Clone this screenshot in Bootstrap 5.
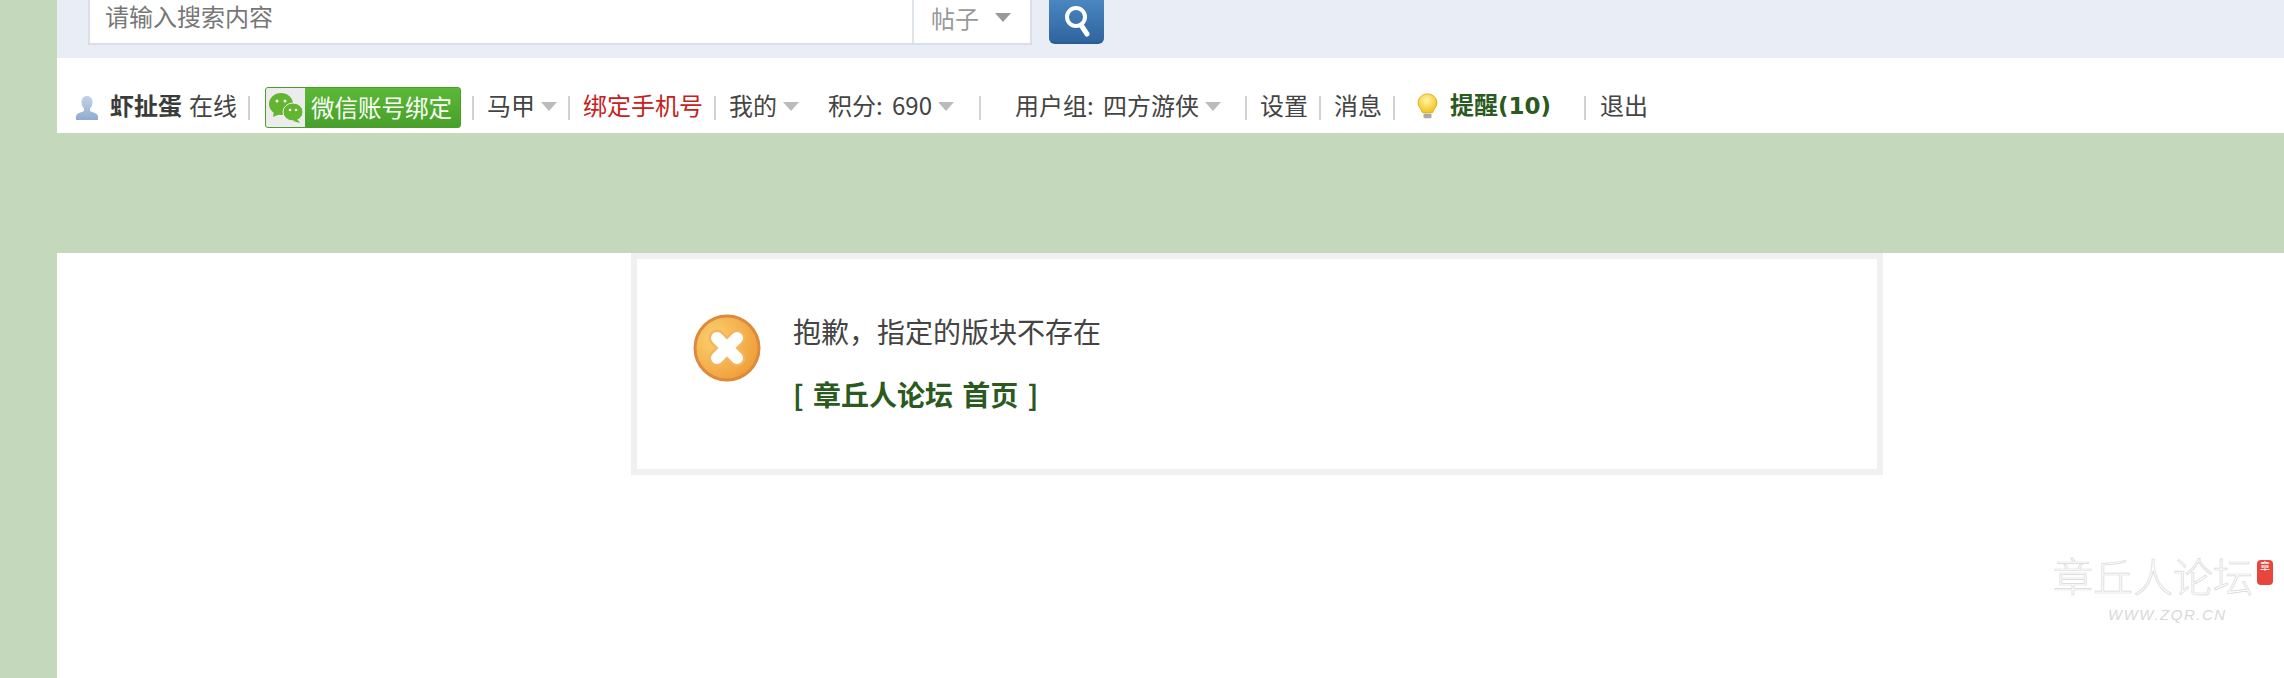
<!DOCTYPE html>
<html lang="zh-CN">
<head>
    <meta charset="UTF-8">
    <meta name="viewport" content="width=device-width, initial-scale=1.0">
    <title>章丘人论坛</title>
    <link href="https://cdn.jsdelivr.net/npm/bootstrap@5.3.2/dist/css/bootstrap.min.css" rel="stylesheet">
    <style>
        html, body { height: 100%; }
        body {
            font-family: "Noto Sans CJK SC", "Liberation Sans", sans-serif;
            font-size: 24px;
            color: #444;
            overflow: hidden;
            position: relative;
        }
        a { color: inherit; text-decoration: none; }
        .side-strip { width: 57px; flex: none; background: #c4d9bc; }
        .main-col { min-width: 0; }

        /* search header */
        .search-bar { height: 58px; background: #e8edf6; padding-left: 31px; }
        .search-box { width: 944px; height: 45px; background: #fff; border-right: 2px solid #d9dfe8; border-bottom: 2px solid #d9dfe8; border-left: 2px solid #d9dfe8; }
        .search-input.form-control { flex: 1; height: 43px; border: 0; border-radius: 0; background: transparent; font-size: 24px; line-height: 1; padding: 0 0 12px 15px; color: #777; box-shadow: none; }
        .search-input::placeholder { color: #777; opacity: 1; }
        .search-type { width: 118px; height: 43px; border-left: 2px solid #dfe3ea; padding: 0 0 8px 17px; color: #999; }
        .search-btn { width: 55px; height: 44px; margin-left: 17px; background: linear-gradient(#4a86c0, #2f659f); border-radius: 0 0 6px 6px; border-bottom: 2px solid #2a5a90; }

        /* user toolbar */
        .tool-bar { height: 75px; padding: 26px 0 8px 19px; white-space: nowrap; line-height: 41px; }
        .caret-down { width: 0; height: 0; border-left: 8px solid transparent; border-right: 8px solid transparent; border-top: 9px solid #bbb; margin-left: 6px; margin-top: 4px; }
        .search-type .caret-down { border-top-color: #999; margin-left: 16px; margin-top: 0; }
        .tool-sep { width: 2px; height: 24px; background: #d2d2d2; margin: 6px 13px 0 11px; }
        .user-icon { margin-right: 12px; margin-top: 6px; }
        .user-name { font-weight: 700; color: #3b3b3b; margin-right: 7px; }
        .wx-bind { width: 196px; height: 41px; flex: none; border-radius: 3px; overflow: hidden; background: linear-gradient(#5cb838, #47a02a); border: 1px solid #4a9c2b; margin: 6px 0 0 2px; }
        .wx-logo { width: 39px; height: 100%; background: #ececec; }
        .wx-text { color: #fbfff8; padding-left: 6px; line-height: 1; font-size: 23.5px; }
        .red-link { color: #c8201a; }
        .gap-wide { margin-left: 29px; }
        .label-num { word-spacing: 4px; }
        .sep-group { margin-left: 25px; margin-right: 34px; }
        .sep-after-group { margin-left: 24px; }
        .bulb-icon { margin-left: 8px; margin-right: 11px; margin-top: 3px; }
        .notice-link { color: #2b5a1f; font-weight: 700; }
        .notice-num { font-family: "DejaVu Sans", sans-serif; font-size: 23px; }
        .sep-exit { margin-left: 33px; margin-right: 14px; }

        /* band + message */
        .green-band { height: 120px; background: #c4d9bc; margin-left: -57px; }
        .msg-box { width: 1252px; height: 222px; margin-left: 574px; border: 6px solid #f0f0f0; padding: 51px 0 0 56px; }
        .msg-text { margin-left: 32px; font-size: 28px; line-height: 42px; color: #444; }
        .msg-link { color: #2b5a1f; font-weight: 700; margin-top: 21px; word-spacing: 3px; }

        /* watermark over the page corner */
        .water-mark { position: absolute; left: 2053px; top: 548px; width: 225px; pointer-events: none; }
        .wm-name { font-size: 40px; line-height: 54px; color: #fff; -webkit-text-stroke: 0.7px #d8d8d8; font-weight: 300; }
        .wm-url { font-family: "Liberation Sans", sans-serif; font-style: italic; font-size: 15px; line-height: 16px; letter-spacing: 1.5px; color: #d8d8d8; margin-left: 55px; margin-top: 5px; }
        .wm-seal { position: absolute; left: 204px; top: 12px; width: 16px; height: 25px; background: #e8453c; border-radius: 4px; color: #fff; font-size: 10px; line-height: 12px; text-align: center; }
    </style>
</head>
<body class="d-flex">
    <div class="side-strip"></div>
    <div class="main-col flex-grow-1">
        <div class="search-bar d-flex align-items-start">
            <div class="search-box d-flex">
                <input type="text" class="form-control search-input" placeholder="请输入搜索内容">
                <div class="search-type d-flex align-items-center">帖子<span class="caret-down"></span></div>
            </div>
            <div class="search-btn d-flex align-items-center justify-content-center">
                <svg width="30" height="32" viewBox="0 0 30 32"><circle cx="14" cy="12" r="9" fill="none" stroke="#fff" stroke-width="4"/><path d="M19 20l6 9" stroke="#fff" stroke-width="5" stroke-linecap="round"/></svg>
            </div>
        </div>

        <div class="tool-bar d-flex align-items-center">
            <svg class="user-icon" width="22" height="24" viewBox="0 0 22 24"><defs><linearGradient id="ug" x1="0" y1="0" x2="0" y2="1"><stop offset="0" stop-color="#c4d3e6"/><stop offset="1" stop-color="#8fabd0"/></linearGradient></defs><path d="M11 0c3.600 0 5.500 2.700 5.500 6 0 2.800-1 5-2.500 6.500v2.500c2.500 1.500 8 2 8 5.500V24H0v-3.500C0 17 5.500 16.500 8 15v-2.500C6.500 11 5.500 8.800 5.500 6 5.500 2.700 7.400 0 11 0z" fill="url(#ug)"/></svg>
            <a href="#" class="user-name">虾扯蛋</a>
            <span>在线</span>
            <span class="tool-sep"></span>
            <a href="#" class="wx-bind d-flex align-items-center">
                <span class="wx-logo d-flex align-items-center justify-content-center">
                    <svg width="36" height="32" viewBox="0 0 36 32"><ellipse cx="13" cy="12" rx="12" ry="11" fill="#62b52f"/><path d="M6 19l-1 6 7-3z" fill="#62b52f"/><circle cx="9" cy="9" r="1.500" fill="#fff"/><circle cx="17" cy="9" r="1.500" fill="#fff"/><ellipse cx="25" cy="20" rx="10" ry="9" fill="#62b52f" stroke="#ececec"/><path d="M29 27l3 4-7-2z" fill="#62b52f"/><circle cx="22" cy="18" r="1.300" fill="#fff"/><circle cx="28" cy="18" r="1.300" fill="#fff"/></svg>
                </span>
                <span class="wx-text">微信账号绑定</span>
            </a>
            <span class="tool-sep"></span>
            <a href="#">马甲</a><span class="caret-down"></span>
            <span class="tool-sep"></span>
            <a href="#" class="red-link">绑定手机号</a>
            <span class="tool-sep"></span>
            <a href="#">我的</a><span class="caret-down"></span>
            <a href="#" class="gap-wide label-num">积分: 690</a><span class="caret-down"></span>
            <span class="tool-sep sep-group"></span>
            <a href="#" class="label-num">用户组: 四方游侠</a><span class="caret-down"></span>
            <span class="tool-sep sep-after-group"></span>
            <a href="#">设置</a>
            <span class="tool-sep"></span>
            <a href="#">消息</a>
            <span class="tool-sep"></span>
            <svg class="bulb-icon" width="23" height="27" viewBox="0 0 25 30"><defs><radialGradient id="bg" cx="0.45" cy="0.35" r="0.65"><stop offset="0" stop-color="#fff6a8"/><stop offset="1" stop-color="#f2c21a"/></radialGradient></defs><path d="M12.500 1C6.500 1 2 5.500 2 11c0 4.500 4 6.500 5 11h11c1-4.500 5-6.500 5-11C23 5.500 18.500 1 12.500 1z" fill="url(#bg)" stroke="#dba90f"/><rect x="8" y="23" width="9" height="5" rx="1.500" fill="#a9a9a9"/></svg>
            <a href="#" class="notice-link">提醒<span class="notice-num">(10)</span></a>
            <span class="tool-sep sep-exit"></span>
            <a href="#">退出</a>
        </div>

        <div class="green-band"></div>

        <div class="msg-box d-flex align-items-start">
            <svg class="mt-1" width="68" height="68" viewBox="0 0 68 68"><defs><radialGradient id="og" cx="0.3" cy="0.35" r="0.8"><stop offset="0" stop-color="#fad06e"/><stop offset="1" stop-color="#ef9a34"/></radialGradient></defs><circle cx="34" cy="34" r="32" fill="url(#og)" stroke="#de8a3c" stroke-width="3"/><path d="M24 24l20 20M44 24L24 44" stroke="#f6b45e" stroke-width="17" stroke-linecap="round"/><path d="M24 24l20 20M44 24L24 44" stroke="#fff" stroke-width="12" stroke-linecap="round"/></svg>
            <div class="msg-text">
                <div>抱歉，指定的版块不存在</div>
                <div class="msg-link"><a href="#">[ 章丘人论坛 首页 ]</a></div>
            </div>
        </div>
    </div>

    <div class="water-mark">
        <div class="wm-name">章丘人论坛</div>
        <div class="wm-url">WWW.ZQR.CN</div>
        <div class="wm-seal">章</div>
    </div>
    <script src="https://cdn.jsdelivr.net/npm/bootstrap@5.3.2/dist/js/bootstrap.bundle.min.js"></script>
</body>
</html>
